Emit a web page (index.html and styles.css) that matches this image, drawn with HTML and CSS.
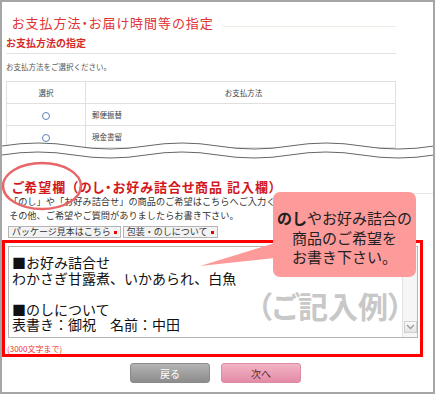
FILE: index.html
```html
<!DOCTYPE html>
<html lang="ja">
<head>
    <meta charset="UTF-8">
    <meta name="viewport" content="width=device-width, initial-scale=1.0">
    <title>ご希望欄</title>
    <link rel="stylesheet" href="styles.css">
</head>
<body>

    <div class="frame">

        <!-- お支払方法 -->
        <section class="pay">
            <div class="pay-title">
                <h1>お支払方法・お届け時間等の指定</h1>
                <span class="rule"></span>
            </div>
            <h2 class="pay-sub">お支払方法の指定</h2>
            <p class="pay-note">お支払方法をご選択ください。</p>
            <table class="pay-table">
                <tr><th class="pick">選択</th><th class="name">お支払方法</th></tr>
                <tr><td class="pick"><span class="radio"></span></td><td>郵便振替</td></tr>
                <tr><td class="pick"><span class="radio"></span></td><td>現金書留</td></tr>
                <tr><td class="pick"><span class="radio"></span></td><td>代金引換</td></tr>
            </table>
        </section>

        <!-- 省略線 -->
        <svg class="cut" width="431" height="24" viewBox="0 0 431 24">
            <path d="M0,8 q36,-6 72,0 t72,0 t72,0 t72,0 t72,0 t72,0 L432,24 L0,24 Z" fill="#fff"/>
            <path d="M0,8 q36,-6 72,0 t72,0 t72,0 t72,0 t72,0 t72,0" fill="none" stroke="#666" stroke-width="1"/>
            <path d="M0,17 q36,-6 72,0 t72,0 t72,0 t72,0 t72,0 t72,0" fill="none" stroke="#666" stroke-width="1"/>
        </svg>

        <!-- ご希望欄 -->
        <section class="wish">
            <div class="wish-title">
                <h2>ご希望欄<span>（のし・お好み詰合せ商品 記入欄）</span></h2>
                <span class="rule"></span>
            </div>
            <p class="wish-note">「のし」や「お好み詰合せ」の商品のご希望はこちらへご入力ください。<br>その他、ご希望やご質問がありましたらお書き下さい。</p>
            <div class="links">
                <a href="#">パッケージ見本はこちら<i></i></a>
                <a href="#">包装・のしについて<i></i></a>
            </div>
            <div class="entry-box">
                <div class="entry">
                    <div class="entry-text">■お好み詰合せ<br>わかさぎ甘露煮、いかあられ、白魚<br><br>■のしについて<br>表書き：御祝　名前：中田</div>
                    <div class="entry-scroll">
                        <span class="arrow">
                            <svg width="9" height="6" viewBox="0 0 9 6"><path d="M1,1 L4.5,4.5 L8,1" fill="none" stroke="#9a9a9a" stroke-width="1.3"/></svg>
                        </span>
                    </div>
                    <span class="sample">（ご記入例）</span>
                </div>
                <p class="count">(3000文字まで)</p>
            </div>
            <div class="actions">
                <button class="btn-back">戻る</button>
                <button class="btn-next">次へ</button>
            </div>
        </section>

        <!-- 丸印 -->
        <svg class="mark" width="84" height="54" viewBox="0 0 84 54">
            <ellipse cx="40" cy="26" rx="39" ry="23" fill="none" stroke="#e8656a" stroke-width="2.5"/>
        </svg>

        <!-- 吹き出し -->
        <div class="balloon">
            <svg class="tail" width="76" height="28" viewBox="0 0 76 28">
                <polygon points="76,3 76,18 1,26" fill="#fd9a9a"/>
            </svg>
            <b>のし</b>やお好み詰合の<br>商品のご希望を<br>お書き下さい。
        </div>

    </div>

</body>
</html>
```

FILE: styles.css
```css
html {
    -webkit-text-size-adjust: 100%;
    text-size-adjust: 100%;
}

body {
    margin: 0;
    font-family: "Noto Sans CJK JP", "Noto Sans", sans-serif;
}

.frame {
    position: relative;
    width: 435px;
    height: 394px;
    box-sizing: border-box;
    border: 2px solid #a5a5a5;
    background-color: #fff;
    overflow: hidden;
}

/* お支払方法 */
.pay {
    height: 146px;
    box-sizing: border-box;
    padding: 13px 37px 0 4px;
    overflow: hidden;
}

.pay-title {
    display: flex;
    align-items: flex-end;
}

.pay-title h1 {
    margin: 0 0 0 6px;
    font-size: 13px;
    line-height: 16px;
    font-weight: normal;
    letter-spacing: 1px;
    color: #e03535;
    font-feature-settings: "palt";
}

.pay-title .rule {
    flex: 1;
    margin: 0 0 4px 9px;
    border-top: 1px solid #f0ebe2;
}

.pay-sub {
    margin: 6px 0 0;
    padding-bottom: 4px;
    border-bottom: 1px solid #e3e3e3;
    font-size: 10px;
    line-height: 12px;
    color: #d42b2b;
}

.pay-note {
    margin: 8px 0 0;
    font-size: 7.5px;
    line-height: 10px;
    color: #555;
}

.pay-table {
    width: 100%;
    margin-top: 9px;
    border-collapse: collapse;
    font-size: 7.5px;
    color: #444;
}

.pay-table th,
.pay-table td {
    height: 21px;
    padding: 0 0 0 6px;
    border: 1px solid #e0e0e0;
    text-align: left;
    font-weight: normal;
}

.pay-table .pick {
    width: 78px;
    padding: 0;
    text-align: center;
}

.pay-table .name {
    text-align: center;
}

.radio {
    display: inline-block;
    width: 6px;
    height: 6px;
    border: 1px solid #5d82b8;
    border-radius: 50%;
    vertical-align: middle;
}

.cut {
    position: absolute;
    left: 0;
    top: 136px;
}

/* ご希望欄 */
.wish {
    padding-top: 32px;
}

.wish-title {
    display: flex;
    align-items: flex-end;
    padding-left: 10px;
}

.wish-title h2 {
    margin: 0;
    font-size: 13px;
    line-height: 14px;
    letter-spacing: 1px;
    color: #d3181c;
    font-feature-settings: "palt";
}

.wish-title h2 span {
    margin-left: 5px;
}

.wish-title .rule {
    flex: 1;
    margin-left: 6px;
    border-top: 1px solid #e8e8e8;
}

.wish-note {
    margin: 0;
    padding-left: 7px;
    font-size: 9.2px;
    line-height: 14px;
    color: #333;
    white-space: nowrap;
}

.links {
    display: flex;
    gap: 2px;
    margin-top: 4px;
    padding-left: 6px;
}

.links a {
    display: flex;
    align-items: center;
    gap: 3px;
    height: 12px;
    box-sizing: border-box;
    padding: 0 3px;
    border: 1px solid #b5b5b5;
    background-color: #f3f3f3;
    font-size: 9px;
    line-height: 10px;
    color: #333;
    text-decoration: none;
}

.links i {
    width: 3px;
    height: 3px;
    background-color: #e00;
}

.entry-box {
    height: 117px;
    box-sizing: border-box;
    margin: 2px 10px 0 0;
    padding: 3px 2px 0 3px;
    border: 3px solid #f00;
}

.entry {
    position: relative;
    display: flex;
    height: 92px;
    box-sizing: border-box;
    border: 1px solid #b5b5b5;
}

.entry-text {
    flex: 1;
    padding: 8px 0 0 3px;
    font-size: 14px;
    line-height: 15.5px;
    color: #111;
    white-space: nowrap;
}

.entry-scroll {
    display: flex;
    flex-direction: column;
    justify-content: flex-end;
    align-items: center;
    width: 15px;
    padding-bottom: 4px;
    box-sizing: border-box;
    border-left: 1px solid #e2e2e2;
    background-color: #f6f6f6;
}

.arrow {
    display: flex;
    align-items: center;
    justify-content: center;
    width: 13px;
    height: 12px;
    box-sizing: border-box;
    border: 1px solid #d0d0d0;
    background: linear-gradient(#fafafa, #e4e4e4);
}

.sample {
    position: absolute;
    right: 14px;
    top: 43px;
    font-size: 30px;
    line-height: 31px;
    font-weight: bold;
    color: #c8c8c8;
    font-feature-settings: "palt";
}

.count {
    margin: 6px 0 0 -1px;
    font-size: 8px;
    line-height: 10px;
    color: #e33;
}

.actions {
    display: flex;
    justify-content: center;
    gap: 11px;
    margin-top: 6px;
    padding-right: 4px;
}

.actions button {
    width: 80px;
    height: 20px;
    border-radius: 3px;
    font-family: inherit;
    font-size: 10px;
    cursor: pointer;
}

.btn-back {
    border: 1px solid #8a8a8a;
    background: linear-gradient(#b4b4b4, #8c8c8c);
    color: #fff;
}

.btn-next {
    border: 1px solid #dc8ca3;
    background: linear-gradient(#f2b4c5, #e38ba6);
    color: #5a2a2a;
}

/* 丸印と吹き出し */
.mark {
    position: absolute;
    left: 0;
    top: 158px;
}

.balloon {
    position: absolute;
    left: 271px;
    top: 190px;
    width: 143px;
    height: 85px;
    box-sizing: border-box;
    padding-top: 16px;
    border-radius: 7px;
    background-color: #fd9a9a;
    font-size: 15px;
    line-height: 19.5px;
    text-align: center;
    color: #222;
}

.balloon .tail {
    position: absolute;
    left: -74px;
    top: 48px;
}
```
